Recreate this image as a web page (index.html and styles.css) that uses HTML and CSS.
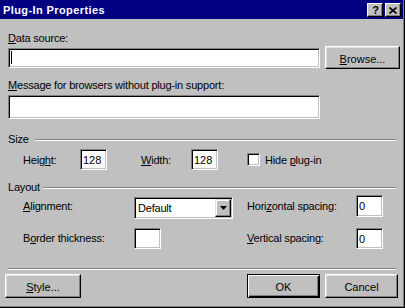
FILE: index.html
```html
<!DOCTYPE html>
<html lang="en">
<head>
    <meta charset="UTF-8">
    <title>Plug-In Properties</title>
    <link rel="stylesheet" href="styles.css">
</head>
<body>
    <div class="window">
        <!-- Caption bar -->
        <div class="titlebar">
            <span class="title-text">Plug-In Properties</span>
            <div class="title-buttons">
                <button class="title-btn help-btn">?</button>
                <button class="title-btn close-btn">
                    <svg width="8" height="7" viewBox="0 0 8 7"><path d="M0.5 0.5 L7.5 6.5 M7.5 0.5 L0.5 6.5" stroke="#000" stroke-width="1.6" fill="none"/></svg>
                </button>
            </div>
        </div>

        <div class="content">
            <!-- Data source -->
            <div class="label source-label"><u>D</u>ata source:</div>
            <div class="source-row">
                <span class="field-wrap">
                    <input type="text" class="field source-field">
                    <span class="caret"></span>
                </span>
                <button class="btn browse-btn"><u>B</u>rowse...</button>
            </div>

            <div class="label message-label"><u>M</u>essage for browsers without plug-in support:</div>
            <input type="text" class="field message-field">

            <!-- Size group -->
            <div class="group-head size-head">
                <span class="group-name">Size</span>
                <span class="etched"></span>
            </div>
            <div class="size-row">
                <span class="row-label height-label">Heig<u>h</u>t:</span>
                <input type="text" class="field small-field" value="128">
                <span class="row-label width-label"><u>W</u>idth:</span>
                <input type="text" class="field small-field" value="128">
                <span class="checkbox"></span>
                <span class="row-label check-label">Hide <u>p</u>lug-in</span>
            </div>

            <!-- Layout group -->
            <div class="group-head layout-head">
                <span class="group-name">Layout</span>
                <span class="etched"></span>
            </div>
            <div class="layout-grid">
                <span class="grid-label"><u>A</u>lignment:</span>
                <div class="combo">
                    <span class="combo-text">Default</span>
                    <span class="combo-btn">
                        <svg width="7" height="4" viewBox="0 0 7 4"><path d="M0 0 H7 L3.5 4 Z" fill="#000"/></svg>
                    </span>
                </div>
                <span class="grid-label">Hori<u>z</u>ontal spacing:</span>
                <input type="text" class="field small-field tall-field" value="0">

                <span class="grid-label">B<u>o</u>rder thickness:</span>
                <input type="text" class="field small-field">
                <span class="grid-label"><u>V</u>ertical spacing:</span>
                <input type="text" class="field small-field" value="0">
            </div>

            <div class="separator"></div>

            <div class="footer">
                <button class="btn style-btn"><u>S</u>tyle...</button>
                <button class="btn ok-btn">OK</button>
                <button class="btn cancel-btn">Cancel</button>
            </div>
        </div>
    </div>
</body>
</html>
```

FILE: styles.css
```css
/* Page reset */
body {
    margin: 0;
    background: #c0c0c0;
}

u {
    text-decoration: underline;
    text-underline-offset: 1px;
}

/* Dialog frame */
.window {
    width: 405px;
    height: 308px;
    box-sizing: border-box;
    background: #c0c0c0;
    border-right: 1px solid #000;
    border-bottom: 1px solid #000;
    box-shadow: inset -1px -1px #808080;
    font: 11px "Liberation Sans", Arial, sans-serif;
    letter-spacing: -0.2px;
    color: #000;
    overflow: hidden;
}

/* Caption bar */
.titlebar {
    width: 403px;
    height: 19px;
    background: #000080;
    display: flex;
    align-items: flex-start;
}

.title-text {
    margin: 4px 0 0 3px;
    line-height: 13px;
    font-weight: bold;
    letter-spacing: 0.4px;
    color: #fff;
}

.title-buttons {
    margin: 3px 2px 0 auto;
    display: flex;
    gap: 2px;
}

.title-btn {
    width: 16px;
    height: 14px;
    padding: 0;
    box-sizing: border-box;
    background: #c0c0c0;
    border: 1px solid;
    border-color: #fff #000 #000 #fff;
    box-shadow: inset -1px -1px #808080;
    display: flex;
    align-items: center;
    justify-content: center;
}

.help-btn {
    font: bold 11px "Liberation Sans", Arial, sans-serif;
    line-height: 12px;
    padding-left: 1px;
}

/* Text fields */
.field {
    appearance: none;
    box-sizing: border-box;
    margin: 0;
    padding: 0 2px;
    border: 1px solid;
    border-color: #808080 #fff #fff #808080;
    box-shadow: inset 1px 1px #000, inset -1px -1px #c0c0c0;
    background: #fff;
    font: inherit;
    color: #000;
    outline: none;
    border-radius: 0;
}

.label {
    line-height: 13px;
    padding-left: 8px;
}

.source-label {
    margin-top: 13px;
}

.source-row {
    margin-top: 1px;
    height: 23px;
    padding-left: 8px;
    display: flex;
    align-items: flex-start;
}

.field-wrap {
    position: relative;
    margin-top: 2px;
}

.source-field {
    display: block;
    width: 312px;
    height: 20px;
}

.caret {
    position: absolute;
    left: 3px;
    top: 3px;
    width: 1px;
    height: 13px;
    background: #000;
}

.message-label {
    margin-top: 10px;
}

.message-field {
    display: block;
    margin: 3px 0 0 8px;
    width: 312px;
    height: 24px;
}

/* Push buttons */
.btn {
    box-sizing: border-box;
    height: 24px;
    margin: 0;
    padding: 3px 0 0;
    background: #c0c0c0;
    border: 1px solid;
    border-color: #fff #000 #000 #fff;
    box-shadow: inset -1px -1px #808080, inset 1px 1px #dfdfdf;
    font: inherit;
    line-height: 13px;
    color: #000;
    border-radius: 0;
}

.browse-btn {
    width: 75px;
    height: 23px;
    margin-left: 5px;
}

/* Group headings with etched rule */
.group-head {
    height: 13px;
    line-height: 13px;
    padding-left: 8px;
    display: flex;
    align-items: center;
}

.size-head {
    margin-top: 14px;
}

.size-head .group-name {
    width: 27px;
}

.layout-head {
    margin-top: 11px;
}

.layout-head .group-name {
    width: 35px;
}

.etched {
    flex: 1;
    margin-right: 8px;
    border-top: 1px solid #808080;
    border-bottom: 1px solid #fff;
}

/* Size row */
.size-row {
    margin-top: 3px;
    height: 21px;
    padding-left: 23px;
    display: flex;
    align-items: flex-start;
}

.row-label {
    padding-top: 5px;
    line-height: 13px;
}

.height-label {
    width: 57px;
}

.small-field {
    width: 27px;
    height: 21px;
}

.width-label {
    width: 50px;
    margin-left: 34px;
}

.checkbox {
    width: 13px;
    height: 13px;
    box-sizing: border-box;
    margin: 4px 0 0 29px;
    border: 1px solid;
    border-color: #808080 #fff #fff #808080;
    box-shadow: inset 1px 1px #000, inset -1px -1px #c0c0c0;
    background: #fff;
}

.check-label {
    margin-left: 5px;
}

/* Layout grid */
.layout-grid {
    margin-top: 1px;
    padding-left: 23px;
    display: grid;
    grid-template-columns: 111px 113px 109px 27px;
    grid-template-rows: 23px 21px;
    row-gap: 10px;
    align-items: center;
}

.grid-label {
    line-height: 13px;
}

.tall-field {
    height: 22px;
    align-self: start;
}

.combo {
    align-self: start;
    margin-top: 2px;
    width: 99px;
    height: 22px;
    box-sizing: border-box;
    border: 1px solid;
    border-color: #808080 #fff #fff #808080;
    box-shadow: inset 1px 1px #000, inset -1px -1px #c0c0c0;
    background: #fff;
    display: flex;
    padding: 1px;
}

.combo-text {
    flex: 1;
    padding-left: 2px;
    line-height: 18px;
}

.combo-btn {
    width: 16px;
    height: 18px;
    box-sizing: border-box;
    background: #c0c0c0;
    border: 1px solid;
    border-color: #dfdfdf #000 #000 #dfdfdf;
    box-shadow: inset -1px -1px #808080, inset 1px 1px #fff;
    display: flex;
    align-items: center;
    justify-content: center;
}

/* Bottom separator and buttons */
.separator {
    margin: 19px 0 0 8px;
    width: 388px;
    border-top: 1px solid #808080;
    border-bottom: 1px solid #fff;
}

.footer {
    margin-top: 4px;
    padding-left: 5px;
    display: flex;
}

.style-btn {
    width: 76px;
}

.ok-btn {
    width: 73px;
    margin-left: 166px;
    border-color: #000;
    box-shadow: inset 1px 1px #fff, inset -1px -1px #000, inset -2px -2px #808080;
}

.cancel-btn {
    width: 73px;
    margin-left: 5px;
}
```
